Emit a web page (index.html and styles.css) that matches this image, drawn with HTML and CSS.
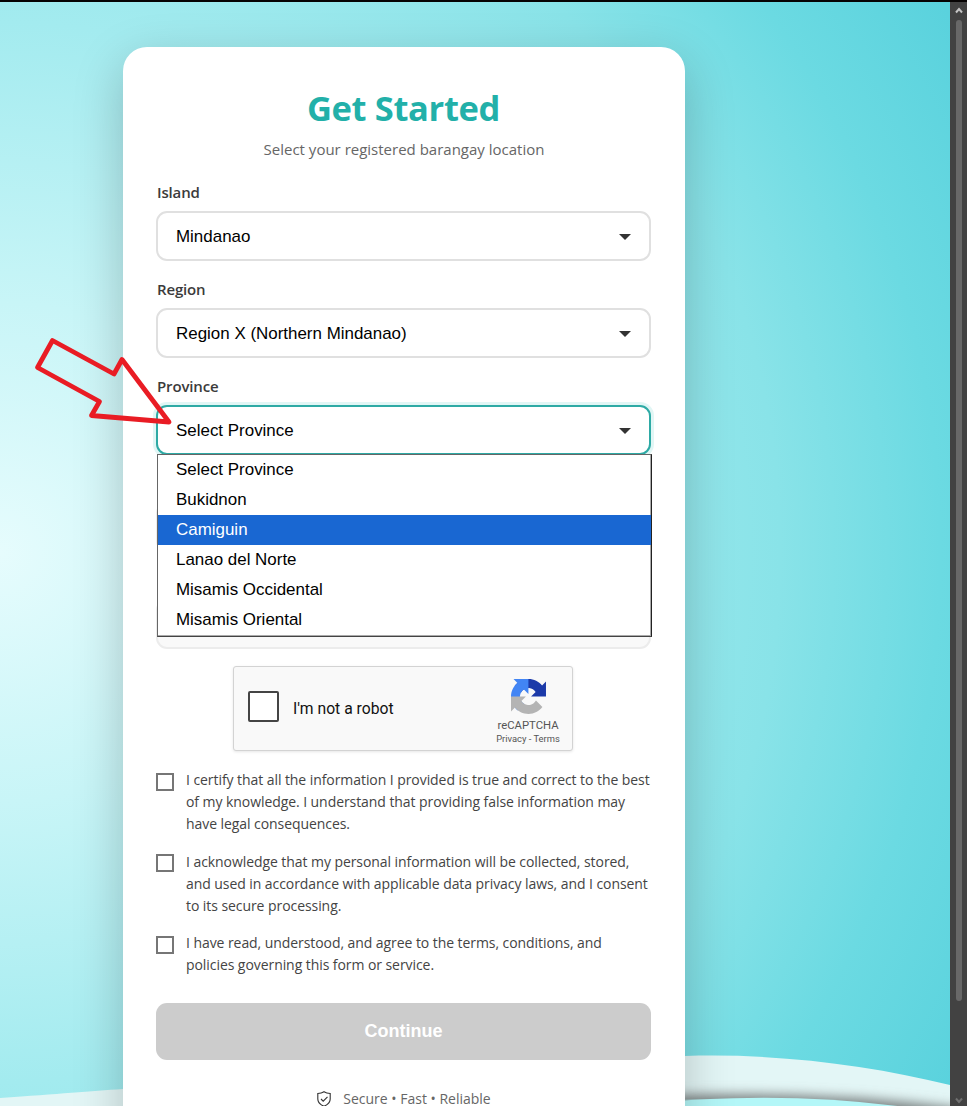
FILE: index.html
```html
<!DOCTYPE html>
<html lang="en">
<head>
<meta charset="utf-8">
<title>Get Started</title>
<link rel="stylesheet" href="styles.css">
</head>
<body>
<div class="window">
  <div class="viewport">
    <svg class="waves" viewBox="0 0 950 1106" aria-hidden="true">
      <defs>
        <clipPath id="band"><path d="M0 1098C60 1094 90 1091 123 1089L685 1056C775 1053 870 1065 950 1085V1106H0Z"/></clipPath>
        <filter id="soft" x="-10%" y="-200%" width="120%" height="500%"><feGaussianBlur stdDeviation="6"/></filter>
      </defs>
      <g clip-path="url(#band)">
        <rect y="1040" width="950" height="66" fill="#e3f6f6"/>
        <path d="M600 1100Q780 1085 960 1108V1130H600Z" fill="#7c8383" filter="url(#soft)"/>
        <path d="M640 1104Q780 1090 905 1107V1130H640Z" fill="#b4f7f8"/>
      </g>
    </svg>
    <main class="card">
      <header class="heading">
        <h1 class="title">Get Started</h1>
        <p class="subtitle">Select your registered barangay location</p>
      </header>
      <div class="field">
        <div class="label">Island</div>
        <div class="select"><span>Mindanao</span><svg class="caret" viewBox="0 0 12 6"><path d="M0 0H12L6 6Z"/></svg></div>
      </div>
      <div class="field">
        <div class="label">Region</div>
        <div class="select"><span>Region X (Northern Mindanao)</span><svg class="caret" viewBox="0 0 12 6"><path d="M0 0H12L6 6Z"/></svg></div>
      </div>
      <div class="field">
        <div class="label">Province</div>
        <div class="select focused"><span>Select Province</span><svg class="caret" viewBox="0 0 12 6"><path d="M0 0H12L6 6Z"/></svg></div>
        <div class="options">
          <div class="option">Select Province</div>
          <div class="option">Bukidnon</div>
          <div class="option active">Camiguin</div>
          <div class="option">Lanao del Norte</div>
          <div class="option">Misamis Occidental</div>
          <div class="option">Misamis Oriental</div>
        </div>
      </div>
      <div class="field"><div class="label"></div><div class="select disabled"></div></div>
      <div class="field"><div class="label"></div><div class="select disabled"></div></div>
      <div class="captcha">
        <div class="captcha-box"></div>
        <div class="captcha-text">I'm not a robot</div>
        <div class="captcha-brand">
          <svg class="captcha-logo" viewBox="0 0 64 64">
            <path fill="#1c3aa9" d="M64 31.955l-.033-1.37V4.687l-7.16 7.16C50.948 4.674 42.033.093 32.05.093c-10.4 0-19.622 4.960-25.458 12.640l11.736 11.860a15.550 15.550 0 0 1 4.754-5.334c2.050-1.600 4.952-2.906 8.968-2.906.485 0 .860.057 1.135.163 4.976.393 9.288 3.140 11.828 7.124l-8.307 8.307L64 31.953"/>
            <path fill="#4285f4" d="M31.862.094l-1.370.033H4.594l7.160 7.160C4.580 13.147 0 22.060 0 32.046c0 10.400 4.960 19.622 12.640 25.458L24.500 45.768a15.550 15.550 0 0 1-5.334-4.754c-1.600-2.050-2.906-4.952-2.906-8.968 0-.485.057-.860.163-1.135.393-4.976 3.140-9.288 7.124-11.828l8.307 8.307L31.860.095"/>
            <path fill="#b4b4b4" d="M.001 32.045l.033 1.370v25.898l7.160-7.160c5.860 7.173 14.774 11.754 24.760 11.754 10.400 0 19.622-4.960 25.458-12.640l-11.736-11.860a15.550 15.550 0 0 1-4.754 5.334c-2.050 1.600-4.952 2.906-8.968 2.906-.485 0-.860-.057-1.135-.163-4.976-.393-9.288-3.140-11.828-7.124l8.307-8.307c-10.522.040-22.400.066-27.295-.005"/>
          </svg>
          <div class="captcha-name">reCAPTCHA</div>
          <div class="captcha-links">Privacy - Terms</div>
        </div>
      </div>
      <div class="consents">
        <div class="consent"><span class="check"></span><p class="consent-text">I certify that all the information I provided is true and correct to the best<br>of my knowledge. I understand that providing false information may<br>have legal consequences.</p></div>
        <div class="consent"><span class="check"></span><p class="consent-text">I acknowledge that my personal information will be collected, stored,<br>and used in accordance with applicable data privacy laws, and I consent<br>to its secure processing.</p></div>
        <div class="consent"><span class="check"></span><p class="consent-text">I have read, understood, and agree to the terms, conditions, and<br>policies governing this form or service.</p></div>
      </div>
      <div class="button">Continue</div>
      <footer class="trust">
        <svg class="shield" viewBox="0 0 14 16"><path d="M7 .7C5 2 3 2.400.8 2.500V8C.8 11.500 3.400 13.700 7 15.300C10.600 13.700 13.200 11.500 13.200 8V2.500C11 2.400 9 2 7 .7Z"/><path d="M4 8L6.200 10.200L10.500 5.800"/></svg>
        <span>Secure • Fast • Reliable</span>
      </footer>
    </main>
    <svg class="pointer" viewBox="0 0 140 92" aria-hidden="true"><path d="M19.500 6.500L81 40L89 25.500L136 88L58.500 81.500L66.500 67.500L4.500 33.500Z" transform="translate(0 -1)"/></svg>
  </div>
  <div class="scrollbar">
    <svg class="chevron" viewBox="0 0 8 7"><path d="M1 5.500L4 2L7 5.500"/></svg>
    <div class="thumb"></div>
    <svg class="chevron down" viewBox="0 0 8 7"><path d="M1 1.500L4 5L7 1.500"/></svg>
  </div>
</div>
</body>
</html>
```
FILE: styles.css
```css
* { box-sizing: border-box; }
body { margin: 0; overflow: hidden; font-family: "Open Sans", "Noto Sans", sans-serif; }
h1, p { margin: 0; }
.window { display: flex; height: 1106px; border-top: 2px solid #060303; overflow: hidden; }
.viewport {
  position: relative; width: 950px; padding: 45px 0 0 123px; overflow: hidden;
  background: radial-gradient(circle 1100px at 0 550px, #e6fcfd 0, #c8f5f7 250px, #a3ebef 530px, #89e3e8 780px, #6bdae2 940px, #5ad2dd 1090px);
}
.waves { position: absolute; left: 0; top: -2px; width: 950px; height: 1106px; }
.card {
  position: relative; width: 562px; height: 1120px; padding: 32px 34px 0 33px;
  background: #fff; border-radius: 24px; box-shadow: 0 16px 50px rgba(0, 0, 0, .22);
}
.heading { height: 103px; text-align: center; }
.title { height: 56px; line-height: 57px; font-size: 34.500px; letter-spacing: -.35px; font-weight: 700; color: #22b0a9; white-space: nowrap; }
.subtitle { height: 28px; line-height: 28px; font-size: 15px; color: #666; white-space: nowrap; padding-left: 1px; }
.field { position: relative; height: 97px; }
.label { height: 29px; font-size: 15px; letter-spacing: -.15px; font-weight: 600; line-height: 21px; color: #3b3b3b; padding-left: 1px; }
.select {
  display: flex; align-items: center; justify-content: space-between; height: 50px; padding: 1px 18px 0 18px;
  border: 2px solid #e0e0e0; border-radius: 11px; background: #fff;
  font-family: "Liberation Sans", sans-serif; font-size: 16.950px; color: #000;
}
.focused { border-color: #2eaaa5; box-shadow: 0 0 0 3px #e1f6f5; }
.disabled { background: #f9f9f9; border-color: #ececec; }
.caret { width: 12px; height: 6px; margin-top: 1px; fill: #333; }
.options {
  position: absolute; z-index: 2; left: 1px; top: 78px; width: 495px; height: 183px;
  border: 1px solid #666; border-right-color: #222; border-bottom-color: #444; background: #fff;
  box-shadow: inset -1px -1px 0 #aaa;
}
.option { height: 30px; line-height: 29px; padding-left: 18px; font-family: "Liberation Sans", sans-serif; font-size: 16.950px; color: #000; }
.active { background: #1967d2; color: #fff; }
.captcha {
  display: flex; width: 340px; height: 85px; margin: -1px 0 0 77px; padding: 0 12px 0 14px;
  border: 1px solid #d3d3d3; border-radius: 3px; background: #f9f9f9; box-shadow: 0 1px 3px rgba(0, 0, 0, .1);
  font-family: Roboto, sans-serif;
}
.captcha-box { width: 31px; height: 31px; margin-top: 24px; border: 2px solid #444; border-radius: 2px; background: #fff; }
.captcha-text { flex: 1; margin: 31px 0 0 14px; font-size: 15.700px; line-height: 21px; color: #111; }
.captcha-brand { display: flex; flex-direction: column; align-items: center; width: 64px; color: #555; white-space: nowrap; }
.captcha-logo { width: 35px; height: 35px; margin-top: 12px; }
.captcha-name { margin-top: 5px; font-size: 11.300px; line-height: 14px; }
.captcha-links { font-size: 9.400px; line-height: 12px; }
.consents { display: flex; flex-direction: column; gap: 15.500px; margin-top: 18px; }
.consent { display: flex; gap: 12px; }
.check { flex: none; width: 18px; height: 18px; margin-top: 4px; border: 2px solid #767676; background: #fff; }
.consent:nth-child(2) .check { margin-top: 3px; }
.consent-text { font-size: 14px; letter-spacing: -.067px; line-height: 22px; color: #444; white-space: nowrap; }
.button {
  display: flex; align-items: center; justify-content: center; height: 57px; margin-top: 27px; border-radius: 11px;
  background: #ccc; color: #fff; font: 700 18px "Liberation Sans", sans-serif; padding-bottom: 1px;
}
.trust { display: flex; align-items: center; justify-content: center; gap: 12px; height: 22px; line-height: 20px; margin-top: 28px; padding-left: 1px; font-size: 14px; color: #666; white-space: nowrap; }
.shield { width: 14px; height: 16px; fill: none; stroke: #333; stroke-width: 1.100; }
.pointer { position: absolute; z-index: 3; left: 33px; top: 333px; width: 140px; height: 92px; overflow: visible; fill: none; stroke: #e91c24; stroke-width: 4.800; stroke-linejoin: round; }
.scrollbar { display: flex; flex-direction: column; align-items: center; width: 17px; padding: 5px 0 0 1px; background: #424242; }
.chevron { width: 8px; height: 7px; fill: none; stroke: #c5c5c5; stroke-width: 2; }
.thumb { width: 6px; height: 981px; margin-top: 6px; border-radius: 3px; background: #686868; }
.down { margin-top: 96px; stroke: #707070; }
```
